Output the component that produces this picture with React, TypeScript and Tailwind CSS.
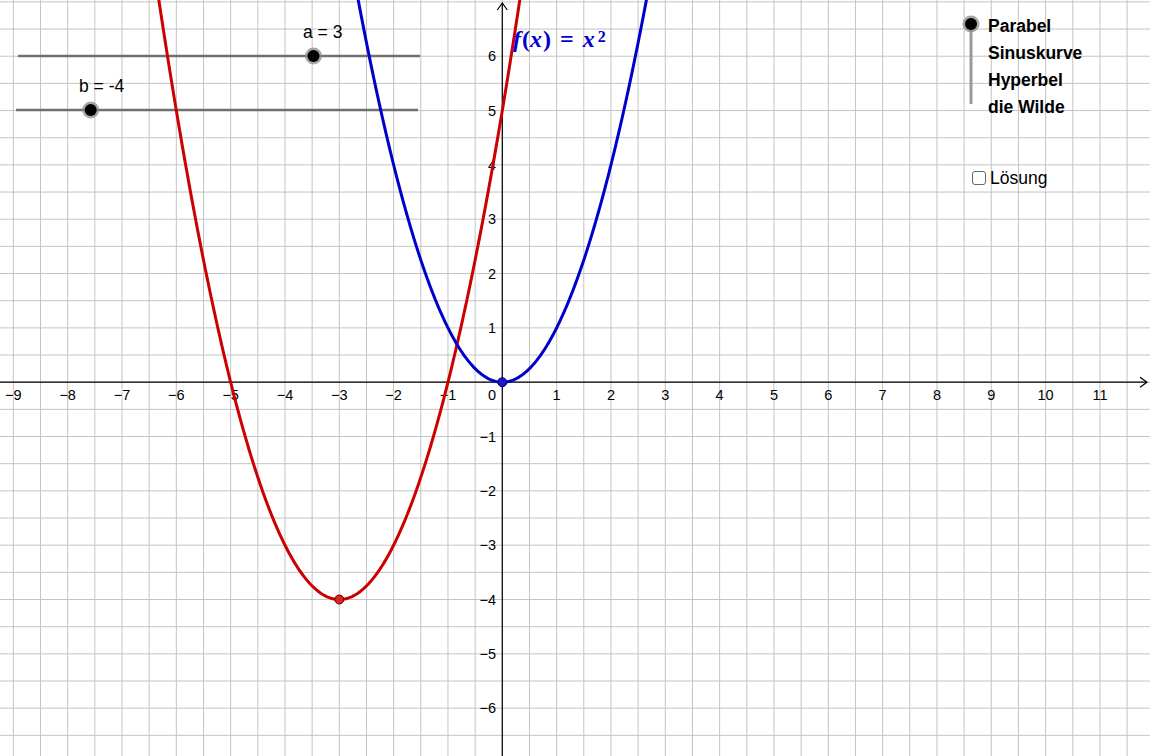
import React from "react";

const W = 1150;
const H = 756;
const OX = 502.3;
const OY = 382.2;
const U = 54.33;

const sx = (x: number) => OX + x * U;
const sy = (y: number) => OY - y * U;

function curve(f: (x: number) => number, from: number, to: number) {
  const pts: string[] = [];
  const steps = 240;
  for (let i = 0; i <= steps; i++) {
    const x = from + ((to - from) * i) / steps;
    pts.push(`${sx(x).toFixed(2)},${sy(f(x)).toFixed(2)}`);
  }
  return "M" + pts.join("L");
}

const xTicks = [-9, -8, -7, -6, -5, -4, -3, -2, -1, 1, 2, 3, 4, 5, 6, 7, 8, 9, 10, 11];
const yTicks = [6, 5, 4, 3, 2, 1, -1, -2, -3, -4, -5, -6];

function fmt(n: number) {
  return n < 0 ? `\u2212${Math.abs(n)}` : `${n}`;
}

function Grid() {
  const vs: number[] = [];
  for (let k = -20; k <= 50; k++) {
    const x = OX + (k * U) / 2;
    if (x >= 0 && x <= W) vs.push(x);
  }
  const hs: number[] = [];
  for (let k = -20; k <= 20; k++) {
    const y = OY + (k * U) / 2;
    if (y >= 0 && y <= H) hs.push(y);
  }
  return (
    <g stroke="#c4c4c4" strokeWidth={1}>
      {vs.map((x) => (
        <line key={"v" + x} x1={x} y1={0} x2={x} y2={H} />
      ))}
      {hs.map((y) => (
        <line key={"h" + y} x1={0} y1={y} x2={W} y2={y} />
      ))}
    </g>
  );
}

function SliderKnob({ cx, cy }: { cx: number; cy: number }) {
  return (
    <g>
      <circle cx={cx} cy={cy} r={8.5} fill="#8a8a8a" opacity={0.75} />
      <circle cx={cx} cy={cy} r={6} fill="#000" />
    </g>
  );
}

export default function App() {
  const font = { fontFamily: '"Liberation Sans", Arial, sans-serif' };
  return (
    <div className="relative w-[1150px] h-[756px] bg-white overflow-hidden" style={font}>
      <svg width={W} height={H} className="absolute inset-0">
        <Grid />

        {/* axes */}
        <g stroke="#000" strokeWidth={1.2} fill="none">
          <line x1={0} y1={OY} x2={1147} y2={OY} />
          <polyline points={`1140,${OY - 5} 1147,${OY} 1140,${OY + 5}`} />
          <line x1={OX} y1={H} x2={OX} y2={3} />
          <polyline points={`${OX - 5},10 ${OX},3 ${OX + 5},10`} />
        </g>

        {/* axis numbers */}
        <g fontSize={14.5} fill="#000" style={font}>
          {xTicks.map((n) => (
            <text key={"x" + n} x={sx(n)} y={400} textAnchor="middle">
              {fmt(n)}
            </text>
          ))}
          <text x={496} y={400} textAnchor="end">
            0
          </text>
          {yTicks.map((n) => (
            <text key={"y" + n} x={496} y={sy(n) + 5} textAnchor="end">
              {fmt(n)}
            </text>
          ))}
        </g>

        {/* sliders */}
        <line x1={18} y1={56} x2={420} y2={56} stroke="#707070" strokeWidth={2.5} />
        <SliderKnob cx={313.5} cy={56} />
        <line x1={16} y1={110} x2={418} y2={110} stroke="#707070" strokeWidth={2.5} />
        <SliderKnob cx={90.7} cy={110} />

        {/* functions */}
        <path
          d={curve((x) => (x + 3) * (x + 3) - 4, -6.65, 0.65)}
          stroke="#cc0000"
          strokeWidth={3}
          fill="none"
        />
        <path d={curve((x) => x * x, -2.75, 2.75)} stroke="#0000cc" strokeWidth={3} fill="none" />

        {/* points */}
        <circle cx={sx(0)} cy={sy(0)} r={4.5} fill="#1a1acc" stroke="#00004d" strokeWidth={1} />
        <circle cx={sx(-3)} cy={sy(-4)} r={4.5} fill="#dd2222" stroke="#550000" strokeWidth={1} />

        {/* radio slider */}
        <line x1={971} y1={24} x2={971} y2={104} stroke="#9a9a9a" strokeWidth={3} />
        <SliderKnob cx={971} cy={24} />
      </svg>

      {/* slider labels */}
      <div className="absolute left-[303px] top-[24px] text-[17.5px] text-black leading-none whitespace-nowrap">
        a = 3
      </div>
      <div className="absolute left-[79px] top-[78px] text-[17.5px] text-black leading-none whitespace-nowrap">
        b = -4
      </div>

      {/* function label */}
      <div
        className="absolute left-[513px] top-[27px] text-[24px] leading-none text-[#0000cc] font-bold whitespace-nowrap"
        style={{ fontFamily: '"Liberation Serif", "Times New Roman", serif' }}
      >
        <i>f</i>
        <span className="ml-[1px]">(</span>
        <i>x</i>
        <span className="ml-[1px]">)</span>
        <span className="mx-[9px]">=</span>
        <i>x</i>
        <sup className="text-[16px] relative -top-[5px] ml-[3px]">2</sup>
      </div>

      {/* choice list */}
      <div className="absolute left-[988px] top-[13px] flex flex-col text-[17.5px] font-bold text-black leading-[27px]">
        <span>Parabel</span>
        <span>Sinuskurve</span>
        <span>Hyperbel</span>
        <span>die Wilde</span>
      </div>

      {/* checkbox */}
      <label className="absolute left-[972px] top-[165px] flex items-center gap-[4px] text-[17.5px] text-black">
        <span className="w-[14px] h-[14px] rounded-[3px] border border-[#666] bg-white" />
        <span>Lösung</span>
      </label>
    </div>
  );
}
